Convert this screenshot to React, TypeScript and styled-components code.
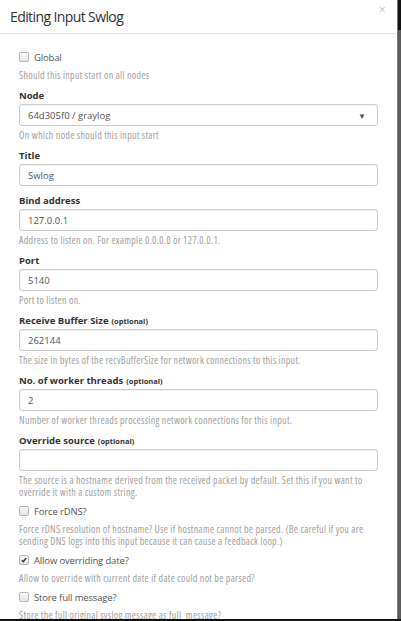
import React from 'react';
import styled, { createGlobalStyle } from 'styled-components';

const GlobalStyle = createGlobalStyle`
  html, body {
    margin: 0;
    padding: 0;
    background: #ffffff;
  }
  body {
    font-family: "Open Sans", "Liberation Sans", sans-serif;
    font-stretch: 92%;
  }
`;

const Page = styled.div`
  display: flex;
  width: 401px;
  height: 619px;
  overflow: hidden;
  border-bottom: 2px solid #111;
`;

const Modal = styled.div`
  width: 397px;
  flex-shrink: 0;
  background: #fff;
  display: flex;
  flex-direction: column;
`;

const Backdrop = styled.div`
  flex: 1;
  display: flex;
  flex-direction: column;
  background: #5b5b5b;
  border-left: 1px solid #7a7a7a;
`;

const BackdropTop = styled.div`
  height: 30px;
  background: #111;
`;

const Header = styled.div`
  flex-shrink: 0;
  height: 34px;
  padding: 0 10px 0 10px;
  display: flex;
  align-items: center;
  justify-content: space-between;
  border-bottom: 1px solid #e5e5e5;
  box-sizing: border-box;
  margin-right: 1px;
`;

const Title = styled.h4`
  margin: 0;
  font-size: 14px;
  letter-spacing: -0.6px;
  font-weight: 400;
  color: #333;
`;

const Close = styled.span`
  font-size: 13px;
  color: #c8c8c8;
  align-self: flex-start;
`;

const Body = styled.div`
  flex-shrink: 0;
  padding: 16px 19px 0 19px;
`;

const FormGroup = styled.div`
  margin-bottom: 6px;
`;

const Label = styled.label`
  display: block;
  font-size: 9.5px;
  line-height: 14px;
  padding-top: 2px;
  font-weight: 700;
  color: #333;
  margin-bottom: 1px;
`;

const Optional = styled.small`
  font-size: 7.5px;
  font-weight: 700;
  color: #333;
  margin-left: 3px;
`;

const Field = styled.div`
  height: 22px;
  border: 1px solid #ccc;
  border-radius: 3px;
  box-sizing: border-box;
  padding: 0 8px;
  display: flex;
  align-items: center;
  font-size: 9.5px;
  color: #555;
  box-shadow: inset 0 1px 1px rgba(0, 0, 0, 0.05);
`;

const Caret = styled.span`
  margin-left: auto;
  margin-right: 3px;
  font-size: 8px;
  color: #555;
`;

const Help = styled.div<{ $check?: boolean }>`
  margin-top: ${(p) => (p.$check ? 5 : 3)}px;
  font-size: 10px;
  font-stretch: 75%;
  letter-spacing: 0.3px;
  line-height: 12px;
  color: #a0a0a0;
`;

const CheckRow = styled.label`
  display: flex;
  align-items: center;
  height: 14px;
  font-size: 9.5px;
  letter-spacing: -0.15px;
  color: #555;
`;

const Box = styled.span`
  width: 8px;
  height: 8px;
  border: 1px solid #b5b5b5;
  border-radius: 2px;
  background: linear-gradient(#fafafa, #e4e4e4);
  margin: 0 5px 0 0;
  display: flex;
  align-items: center;
  justify-content: center;
`;

const Check = ({ checked, label, help }: { checked?: boolean; label: string; help: React.ReactNode }) => (
  <FormGroup>
    <CheckRow>
      <Box>
        {checked && (
          <svg width="6" height="6" viewBox="0 0 6 6">
            <path d="M0.8 3.2 L2.3 4.7 L5.2 1" stroke="#333" strokeWidth="1.3" fill="none" />
          </svg>
        )}
      </Box>
      {label}
    </CheckRow>
    <Help $check>{help}</Help>
  </FormGroup>
);

const TextField = ({
  label,
  optional,
  value,
  help,
}: {
  label: string;
  optional?: boolean;
  value: string;
  help?: React.ReactNode;
}) => (
  <FormGroup>
    <Label>
      {label}
      {optional && <Optional>(optional)</Optional>}
    </Label>
    <Field>{value}</Field>
    {help && <Help>{help}</Help>}
  </FormGroup>
);

const App = () => {
  return (
    <>
      <GlobalStyle />
      <Page>
        <Modal>
          <Header>
            <Title>Editing Input Swlog</Title>
            <Close>×</Close>
          </Header>
          <Body>
            <Check label="Global" help="Should this input start on all nodes" />
            <FormGroup>
              <Label>Node</Label>
              <Field>
                64d305f0 / graylog
                <Caret>▼</Caret>
              </Field>
              <Help>On which node should this input start</Help>
            </FormGroup>
            <TextField label="Title" value="Swlog" />
            <TextField
              label="Bind address"
              value="127.0.0.1"
              help="Address to listen on. For example 0.0.0.0 or 127.0.0.1."
            />
            <TextField label="Port" value="5140" help="Port to listen on." />
            <TextField
              label="Receive Buffer Size"
              optional
              value="262144"
              help="The size in bytes of the recvBufferSize for network connections to this input."
            />
            <TextField
              label="No. of worker threads"
              optional
              value="2"
              help="Number of worker threads processing network connections for this input."
            />
            <TextField
              label="Override source"
              optional
              value=""
              help="The source is a hostname derived from the received packet by default. Set this if you want to override it with a custom string."
            />
            <Check
              label="Force rDNS?"
              help="Force rDNS resolution of hostname? Use if hostname cannot be parsed. (Be careful if you are sending DNS logs into this input because it can cause a feedback loop.)"
            />
            <Check
              checked
              label="Allow overriding date?"
              help="Allow to override with current date if date could not be parsed?"
            />
            <Check label="Store full message?" help="Store the full original syslog message as full_message?" />
          </Body>
        </Modal>
        <Backdrop>
          <BackdropTop />
        </Backdrop>
      </Page>
    </>
  );
};

export default App;
